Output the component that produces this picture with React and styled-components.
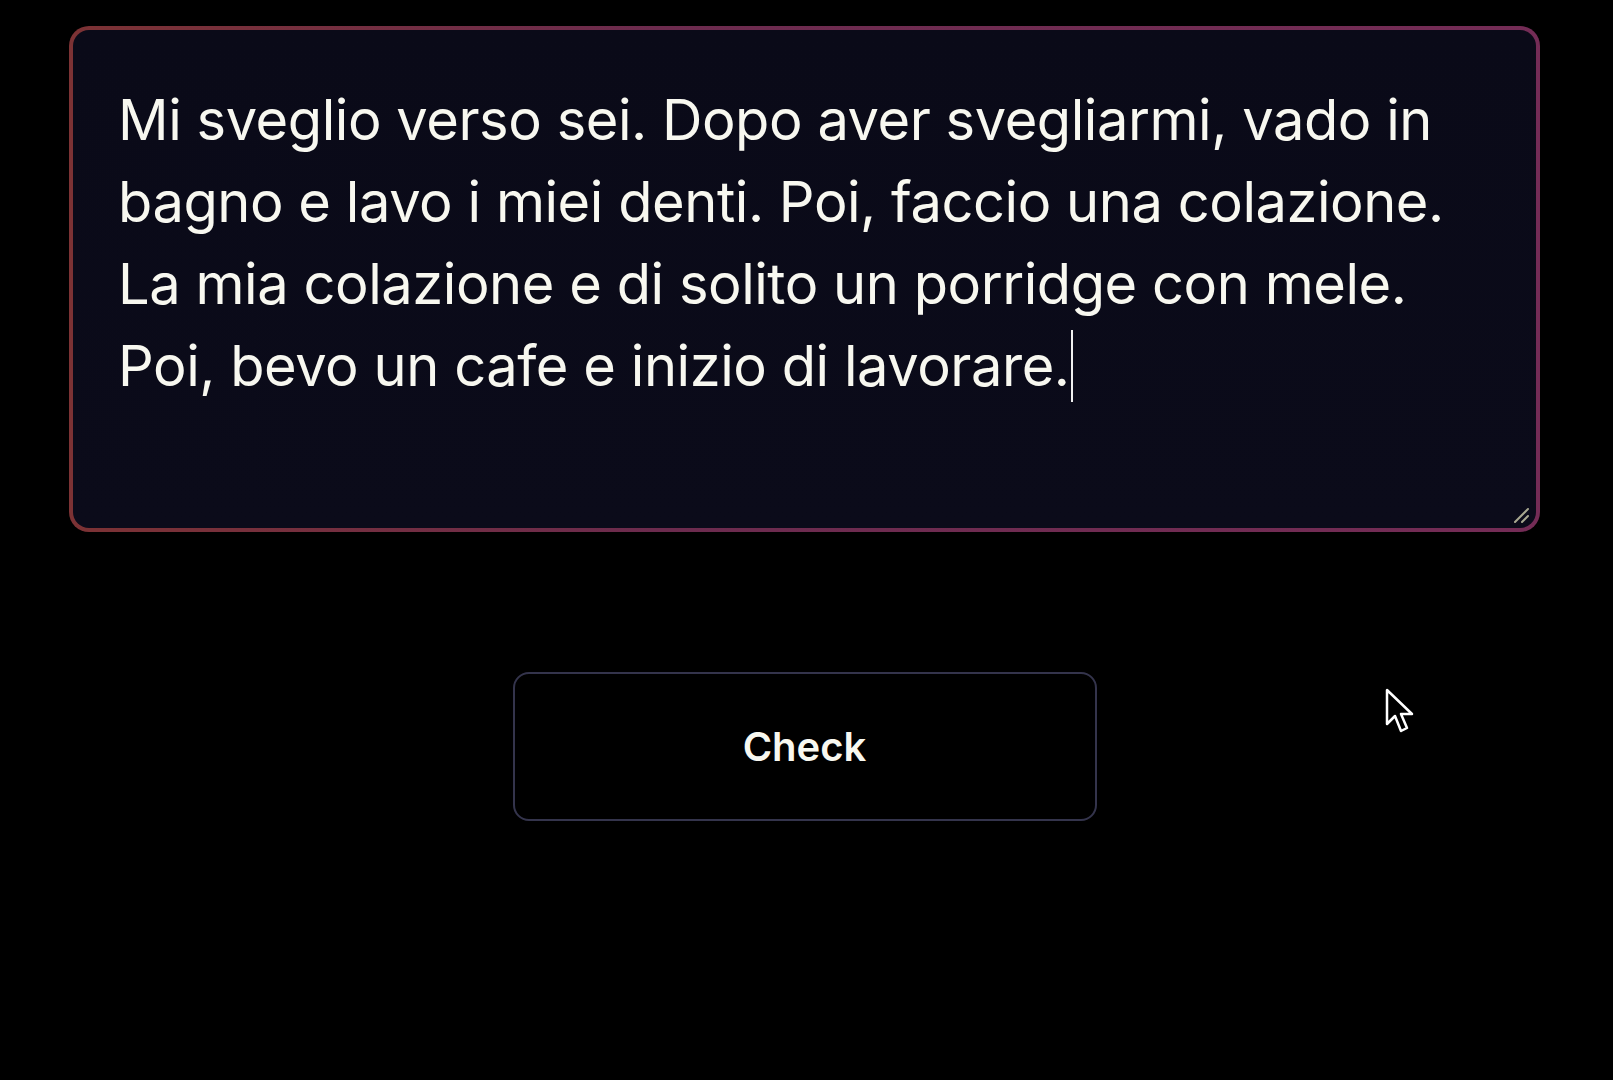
import styled, { createGlobalStyle } from 'styled-components'

const GlobalStyle = createGlobalStyle`
    html, body {
        margin: 0;
        padding: 0;
        background: #000000;
    }
    body {
        font-family: Inter, "Noto Sans", sans-serif;
        color: #f6f6f0;
        min-height: 1080px;
    }
`

const lines = [
    'Mi sveglio verso sei. Dopo aver svegliarmi, vado in',
    'bagno e lavo i miei denti. Poi, faccio una colazione.',
    'La mia colazione e di solito un porridge con mele.',
    'Poi, bevo un cafe e inizio di lavorare.',
]

const App = () => {
    return (
        <>
            <GlobalStyle />
            <Page>
                <Editor>
                    {lines.map((line, i) => (
                        <Line key={i}>
                            {line}
                            {i === lines.length - 1 && <Caret />}
                        </Line>
                    ))}
                    <Grip viewBox="0 0 18 16">
                        <line x1="3" y1="15" x2="16" y2="2" />
                        <line x1="10" y1="15" x2="16" y2="9" />
                    </Grip>
                </Editor>
                <CheckButton>Check</CheckButton>
            </Page>
            <Pointer viewBox="0 0 30 46">
                <path d="M2 2 L2 36 L10 28 L16 43 L22 40 L16 26 L27 26 Z" />
            </Pointer>
        </>
    )
}

const Page = styled.main`
    display: flex;
    flex-direction: column;
    align-items: center;
    padding: 26px 73px 0 69px;
    gap: 140px;
`

const Editor = styled.div`
    position: relative;
    box-sizing: border-box;
    width: 100%;
    height: 506px;
    padding: 49px 44px 0 45px;
    border: 4px solid transparent;
    border-radius: 20px;
    background:
        linear-gradient(#0a0a18, #0b0b1a) padding-box,
        linear-gradient(90deg, #7c3234 0%, #6c2b4e 40%, #742c56 100%) border-box;
`

const Line = styled.div`
    font-size: 56px;
    line-height: 82px;
    font-weight: 400;
    letter-spacing: -0.45px;
    white-space: nowrap;
    color: #f8f8f0;
`

const Caret = styled.span`
    display: inline-block;
    width: 2px;
    height: 72px;
    margin-left: 1px;
    vertical-align: -16px;
    background: #f0f0f0;
`

const Grip = styled.svg`
    position: absolute;
    right: 6px;
    bottom: 5px;
    width: 18px;
    height: 16px;
    stroke: #a8a890;
    stroke-width: 2;
    stroke-linecap: round;
`

const CheckButton = styled.button`
    box-sizing: border-box;
    width: 584px;
    height: 149px;
    border: 2px solid #34344c;
    border-radius: 16px;
    background: #000000;
    color: #f8f8f0;
    font-family: Inter, "Noto Sans", sans-serif;
    font-size: 40px;
    font-weight: 600;
    cursor: pointer;
`

const Pointer = styled.svg`
    position: absolute;
    left: 1385px;
    top: 688px;
    width: 30px;
    height: 46px;
    fill: #000000;
    stroke: #ffffff;
    stroke-width: 2.5;
    stroke-linejoin: round;
`

export default App
